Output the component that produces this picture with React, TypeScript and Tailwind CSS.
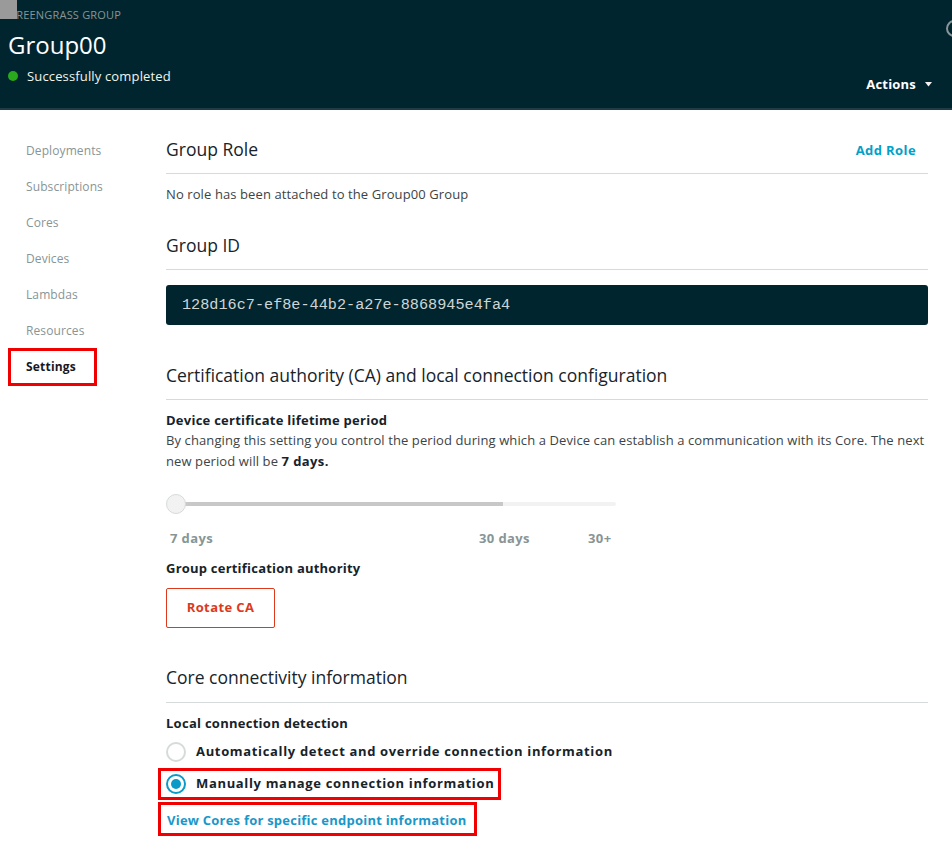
import React from "react";

const sans = { fontFamily: '"Open Sans", "Noto Sans", sans-serif' };

function Radio({ checked }: { checked?: boolean }) {
  if (checked) {
    return (
      <span className="flex h-[20px] w-[20px] shrink-0 items-center justify-center rounded-full border-[2px] border-[#0a9ac7] bg-white">
        <span className="h-[10px] w-[10px] rounded-full bg-[#0a9ac7]" />
      </span>
    );
  }
  return <span className="h-[20px] w-[20px] shrink-0 rounded-full border-[2px] border-[#d5dbdb] bg-white" />;
}

export default function App() {
  const nav = ["Deployments", "Subscriptions", "Cores", "Devices", "Lambdas", "Resources"];
  return (
    <div className="min-h-[846px] w-[952px] overflow-hidden bg-white" style={sans}>
      {/* Header */}
      <div className="relative h-[110px] border-b-[2px] border-[#1f3c46] bg-[#01252f]">
        <div className="absolute left-0 top-0 h-[19px] w-[17px] bg-[#9a9a9a]" />
        <div className="absolute left-[946px] top-[20px] h-[17px] w-[17px] rounded-full border-[2px] border-[#8a9596]" />
        <div className="flex h-full items-start justify-between">
          <div className="flex flex-col pl-[8px]">
            <div className="mt-[7px] h-[16px] text-[11px] leading-[16px] tracking-[0.2px] text-[#879596]">GREENGRASS GROUP</div>
            <div className="mt-[7px] h-[30px] text-[24px] leading-[30px] text-white">Group00</div>
            <div className="mt-[6px] flex h-[20px] items-center">
              <span className="h-[10px] w-[10px] rounded-full bg-[#2aa91c]" />
              <span className="ml-[9px] text-[13px] leading-[20px] tracking-[0.15px] text-[#f4f4ea]">Successfully completed</span>
            </div>
          </div>
          <div className="mr-[20px] mt-[74px] flex h-[20px] items-center">
            <span className="text-[13px] font-bold leading-[20px] tracking-[0.2px] text-white">Actions</span>
            <svg className="ml-[9px]" width="7" height="5" viewBox="0 0 7 5">
              <path d="M0 0 H7 L3.5 4.5 Z" fill="#f6f0f0" />
            </svg>
          </div>
        </div>
      </div>

      {/* Body */}
      <div className="flex">
        {/* Sidebar */}
        <div className="flex w-[166px] shrink-0 flex-col pt-[23px]">
          {nav.map((n) => (
            <div key={n} className="flex h-[36px] items-center pl-[26px] text-[12px] tracking-[0.1px] text-[#879596]">
              {n}
            </div>
          ))}
          <div className="ml-[8px] mt-[-1px] flex h-[38px] w-[89px] items-center border-[3px] border-[#f00000] pl-[15px] text-[12px] font-bold tracking-[0.2px] text-[#16191f]">
            Settings
          </div>
        </div>

        {/* Main */}
        <div className="flex min-w-0 flex-1 flex-col pr-[24px]">
          {/* Group Role */}
          <div className="mt-[25px] flex items-center justify-between border-b border-[#d5dbdb] pb-[10px]">
            <h2 className="h-[28px] text-[17.5px] leading-[28px] text-[#16232b]">Group Role</h2>
            <span className="mr-[12px] mt-[3px] text-[13px] font-bold tracking-[0.4px] text-[#00a1c9]">Add Role</span>
          </div>
          <p className="mt-[10px] h-[20px] text-[13px] leading-[20px] tracking-[0.1px] text-[#3b4448]">No role has been attached to the Group00 Group</p>

          {/* Group ID */}
          <div className="mt-[27px] border-b border-[#d5dbdb] pb-[10px]">
            <h2 className="h-[28px] text-[17.5px] leading-[28px] text-[#16232b]">Group ID</h2>
          </div>
          <div
            className="mt-[15px] flex h-[40px] items-center rounded-[3px] bg-[#01252f] pl-[16px] text-[15.2px] text-[#cfd5d5]"
            style={{ fontFamily: '"Liberation Mono", "DejaVu Sans Mono", monospace' }}
          >
            128d16c7-ef8e-44b2-a27e-8868945e4fa4
          </div>

          {/* CA */}
          <div className="mt-[36px] border-b border-[#d5dbdb] pb-[10px]">
            <h2 className="h-[28px] text-[17.5px] leading-[28px] text-[#16232b]">
              Certification authority (CA) and local connection configuration
            </h2>
          </div>
          <div className="mt-[10px] h-[20px] text-[13px] font-bold leading-[20px] tracking-[0.25px] text-[#16232b]">Device certificate lifetime period</div>
          <div className="flex flex-col text-[13px] leading-[21px] tracking-[0.1px] text-[#3b4448]">
            <span>By changing this setting you control the period during which a Device can establish a communication with its Core. The next</span>
            <span>
              <span>new period will be </span>
              <b className="tracking-[0.4px] text-[#16232b]">7 days.</b>
            </span>
          </div>

          {/* Slider */}
          <div className="mt-[22px] flex h-[20px] w-[450px] items-center">
            <div className="relative flex h-[20px] w-full items-center">
              <div className="ml-[10px] flex h-[4px] flex-1 overflow-hidden rounded-full bg-[#f2f2f2]">
                <div className="h-full w-[327px] bg-[#c8c8c8]" />
              </div>
              <div className="absolute left-0 top-0 h-[20px] w-[20px] rounded-full border border-[#d5dbdb] bg-[#f2f2f2]" />
            </div>
          </div>
          <div className="mt-[14px] flex h-[20px] w-[450px] text-[13px] font-bold leading-[20px] tracking-[0.4px] text-[#879596]">
            <span className="w-[313px] pl-[4px]">7 days</span>
            <span className="w-[109px]">30 days</span>
            <span>30+</span>
          </div>

          <div className="mt-[10px] h-[20px] text-[13px] font-bold leading-[20px] tracking-[0.22px] text-[#16232b]">Group certification authority</div>
          <button className="mt-[10px] flex h-[40px] w-[109px] items-center justify-center rounded-[2px] border border-[#dc3a1a] bg-white text-[13px] font-bold tracking-[0.4px] text-[#dc3a1a]">
            Rotate CA
          </button>

          {/* Core connectivity */}
          <div className="mt-[35px] border-b border-[#d5dbdb] pb-[11px]">
            <h2 className="h-[28px] text-[17.5px] leading-[28px] text-[#16232b]">Core connectivity information</h2>
          </div>
          <div className="mt-[10px] h-[20px] text-[13px] font-bold leading-[20px] tracking-[0.27px] text-[#16232b]">Local connection detection</div>
          <div className="mt-[8px] flex h-[22px] items-center gap-[10px]">
            <Radio />
            <span className="text-[13px] font-bold tracking-[0.66px] text-[#16232b]">Automatically detect and override connection information</span>
          </div>
          <div className="ml-[-8px] mt-[5px] flex h-[32px] w-[343px] items-center gap-[10px] border-[3px] border-[#f00000] pl-[5px]">
            <Radio checked />
            <span className="text-[13px] font-bold tracking-[0.66px] text-[#16232b]">Manually manage connection information</span>
          </div>
          <div className="ml-[-8px] mt-[2px] flex h-[34px] w-[319px] items-center border-[3px] border-[#f00000] pl-[6px] pt-[3px]">
            <a className="text-[13px] font-bold tracking-[0.23px] text-[#1a97c9]">View Cores for specific endpoint information</a>
          </div>
        </div>
      </div>
    </div>
  );
}
